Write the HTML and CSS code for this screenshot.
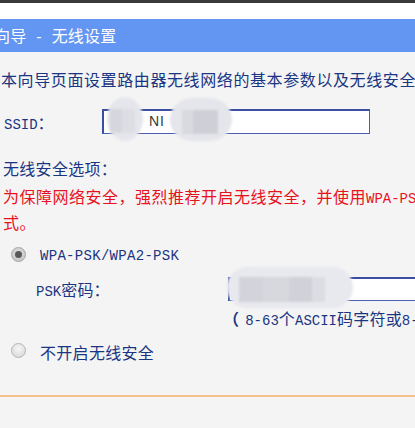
FILE: index.html
```html
<!DOCTYPE html>
<html lang="zh-CN">
<head>
<meta charset="utf-8">
<title>向导 - 无线设置</title>
<link rel="stylesheet" href="styles.css">
</head>
<body>
<div class="topbar"></div>
<div class="whiteband"></div>
<div class="header"><span class="title">向导<span class="lat"> - </span>无线设置</span></div>
<div class="content">
  <p class="intro">本向导页面设置路由器无线网络的基本参数以及无线安全。</p>
  <div class="row ssid-row">
    <span class="label ssid-label"><span class="lat">SSID</span>：</span>
    <div class="field ssid-field">
      <span class="ssid-text">NI</span>
      <span class="blob blob-a"><span class="px px-a"></span></span>
      <span class="blob blob-b"><span class="px px-b"></span></span>
    </div>
  </div>
  <p class="opt-title">无线安全选项：</p>
  <div class="warn">
    <p class="warn-line">为保障网络安全，强烈推荐开启无线安全，并使用<span class="lat">WPA-PSK/WPA2-PSK AES</span>加密方</p>
    <p class="warn-line">式。</p>
  </div>
  <div class="row radio-row first">
    <span class="radio checked"></span>
    <span class="lat radio-text">WPA-PSK/WPA2-PSK</span>
  </div>
  <div class="row psk-row">
    <span class="label psk-label"><span class="lat">PSK</span>密码：</span>
    <div class="field psk-field">
      <span class="blob blob-c"><span class="px px-c"></span></span>
    </div>
  </div>
  <p class="hint"><span class="paren">（</span><span class="lat">8-63</span>个<span class="lat">ASCII</span>码字符或<span class="lat">8-64</span>个十六进制字符）</p>
  <div class="row radio-row second">
    <span class="radio"></span>
    <span class="radio-text">不开启无线安全</span>
  </div>
  <div class="divider"></div>
</div>
</body>
</html>
```

FILE: styles.css
```css
html, body {
  margin: 0;
  padding: 0;
}
body {
  width: 415px;
  height: 428px;
  overflow: hidden;
  background: #f4f4f5;
  font-family: "Noto Sans CJK SC", "Noto Sans", sans-serif;
  font-size: 16px;
  color: #1a3582;
}
p { margin: 0; }
.lat {
  font-family: "Liberation Mono", "Noto Sans CJK SC", monospace;
  font-size: 14px;
  letter-spacing: 0;
}
.topbar {
  height: 3px;
  background: #3a3a3a;
}
.whiteband {
  height: 16px;
  background: #ffffff;
}
.header {
  height: 33px;
  line-height: 33px;
  background: #6396f2;
  color: #ffffff;
  white-space: nowrap;
  overflow: hidden;
}
.title {
  display: inline-block;
  margin-left: -6px;
  letter-spacing: 0.2px;
}
.content {
  white-space: nowrap;
}
.intro {
  margin-top: 15px;
  height: 24px;
  line-height: 24px;
  padding-left: 1px;
  letter-spacing: 0.6px;
}
.row {
  display: flex;
  align-items: center;
}
.ssid-row {
  margin-top: 18px;
  height: 25px;
  padding-left: 4px;
}
.label {
  flex: none;
  letter-spacing: 0.2px;
}
.ssid-label { width: 98px; }
.field {
  position: relative;
  flex: none;
  box-sizing: border-box;
  background: #ffffff;
  border: 1px solid #4a5fb0;
  border-top: 2px solid #3a4fa0;
  border-left: 2px solid #3a4fa0;
}
.ssid-field {
  width: 268px;
  height: 25px;
}
.ssid-text {
  position: absolute;
  left: 45px;
  top: 2px;
  font-family: "Liberation Sans", sans-serif;
  font-size: 14px;
  color: #2f3d3a;
  letter-spacing: 1px;
}
.blob {
  position: absolute;
  background: #e5e6eb;
  filter: blur(1px);
}
.px {
  position: absolute;
  display: block;
}
.blob-a {
  left: 3px;
  top: -14px;
  width: 36px;
  height: 44px;
  border-radius: 50%;
}
.px-a {
  left: 3px;
  top: 12px;
  width: 25px;
  height: 24px;
  background: linear-gradient(90deg, #d6d7de 0 50%, #dddee4 50% 100%);
}
.blob-b {
  left: 66px;
  top: -13px;
  width: 62px;
  height: 43px;
  border-radius: 22px;
}
.px-b {
  left: 12px;
  top: 12px;
  width: 36px;
  height: 24px;
  background: linear-gradient(90deg, #d9dae0 0 30%, #cfd0d7 30% 100%);
}
.opt-title {
  margin-top: 24px;
  height: 20px;
  line-height: 20px;
  padding-left: 3px;
  letter-spacing: 0.3px;
}
.warn {
  margin-top: 5px;
  color: #e8121c;
}
.warn-line {
  height: 26px;
  line-height: 26px;
  padding-left: 3px;
  letter-spacing: 0.5px;
}
.radio-row.first {
  margin-top: 10px;
  height: 22px;
  padding-left: 11px;
}
.radio {
  flex: none;
  box-sizing: border-box;
  width: 15px;
  height: 15px;
  border-radius: 50%;
  border: 1px solid #b4b4b4;
  background: radial-gradient(circle at 50% 35%, #f6f6f6 0, #d4d4d4 100%);
  margin-right: 14px;
  margin-bottom: 4px;
  display: flex;
  align-items: center;
  justify-content: center;
}
.radio.checked {
  border-color: #a6a6a6;
  background: radial-gradient(circle at 50% 40%, #e2e2e2 0, #bdbdbd 100%);
}
.radio.checked::after {
  content: "";
  width: 7px;
  height: 7px;
  border-radius: 50%;
  background: #585858;
}
.radio-text {
  letter-spacing: 0.3px;
}
.psk-row {
  margin-top: 10px;
  height: 24px;
  padding-left: 36px;
}
.psk-label { width: 192px; }
.psk-field {
  width: 240px;
  height: 24px;
}
.blob-c {
  left: -3px;
  top: -12px;
  width: 126px;
  height: 41px;
  border-radius: 20px;
  background: #e8e9ee;
}
.px-c {
  left: 12px;
  top: 10px;
  width: 86px;
  height: 25px;
  background: linear-gradient(90deg, #d3d4db 0 28%, #d7d8de 28% 58%, #d1d2d9 58% 85%, #dcdde3 85% 100%);
}
.hint {
  margin-top: 7px;
  height: 20px;
  line-height: 20px;
  padding-left: 223px;
  letter-spacing: 0.2px;
}
.paren {
  margin-right: 6px;
  font-weight: bold;
}
.radio-row.second {
  margin-top: 13px;
  height: 22px;
  padding-left: 11px;
}
.divider {
  margin-top: 32px;
  height: 2px;
  background: #f5c08c;
}
```
